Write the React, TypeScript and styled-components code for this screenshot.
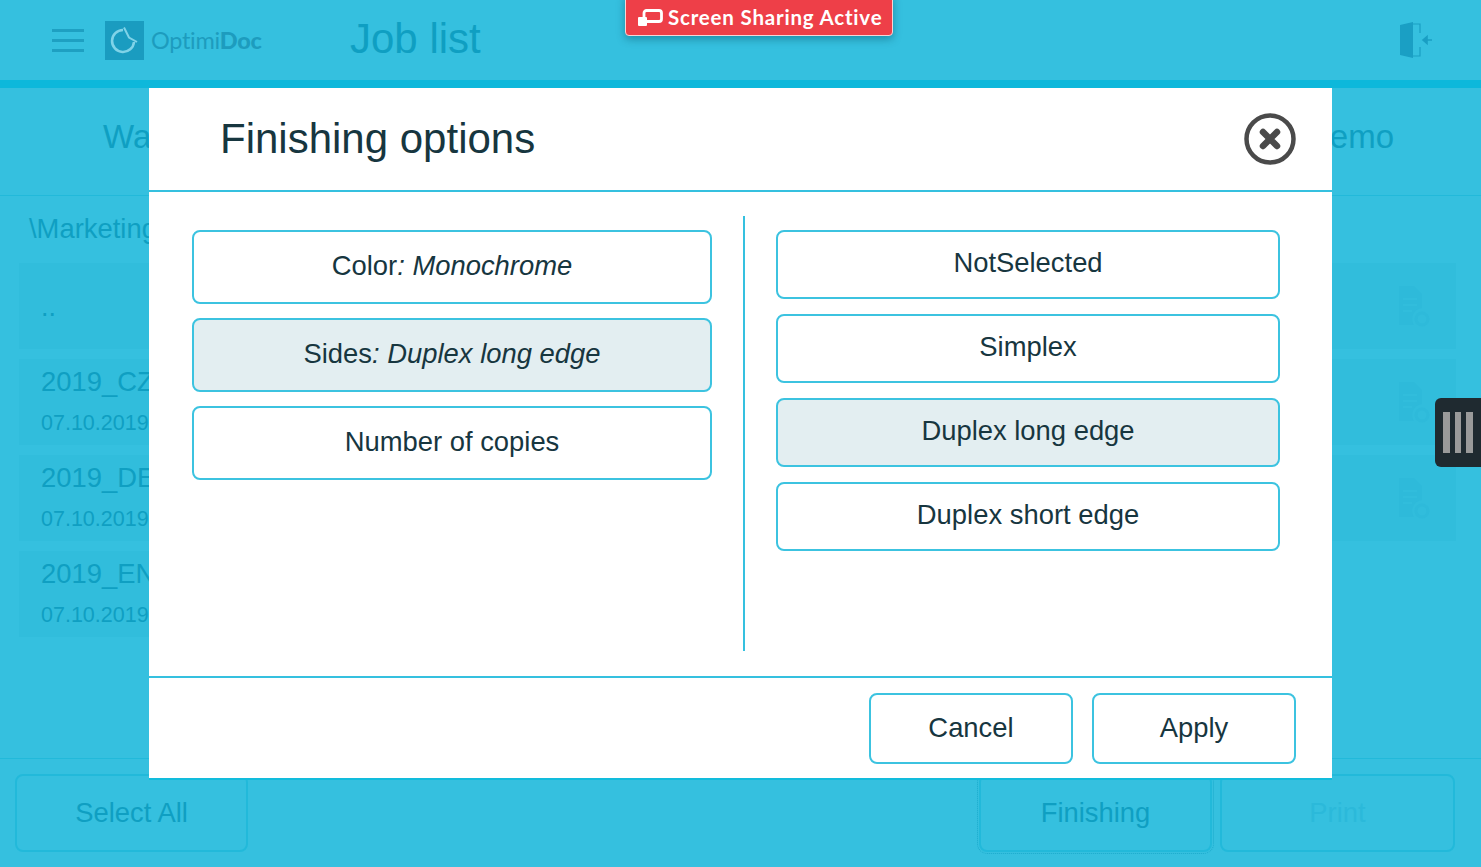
import styled, { createGlobalStyle } from "styled-components";

const GlobalStyle = createGlobalStyle`
  html, body {
    margin: 0;
    padding: 0;
    height: 100%;
    overflow: hidden;
  }

  body {
    background: #35c0df;
    font-family: "Liberation Sans", Arial, sans-serif;
  }
`

const muted = "#0f9fc2";
const ink = "#17363f";
const line = "#3cc3e0";

const jobs = ["2019_CZ", "2019_DE", "2019_EN"];

const FileIcon = () => (
  <FileSvg viewBox="0 0 34 44">
    <path d="M3 1h15l8 8v14a11 11 0 0 0-8 17H3z" />
    <path d="M7 14h14M7 20h14M7 26h9" stroke="#31bddc" strokeWidth="2" />
    <circle cx="26" cy="34" r="6" fill="none" stroke="#2ebada" strokeWidth="3" />
  </FileSvg>
)

const App = () => {
  return (
    <>
      <GlobalStyle />
      <Page>
        <Header>
          <Burger>
            <span />
            <span />
            <span />
          </Burger>
          <Logo>
            <LogoMark viewBox="0 0 39 39">
              <rect width="39" height="39" fill="#1a9cc0" />
              <path
                d="M18 9A11 11 0 1 0 29 21"
                fill="none"
                stroke="#7fd3e8"
                strokeWidth="2.600"
              />
              <path
                d="M19 6.500L24 16.500 32 21"
                fill="none"
                stroke="#7fd3e8"
                strokeWidth="2"
              />
            </LogoMark>
            <LogoText>Optimi<b>Doc</b></LogoText>
          </Logo>
          <Title>Job list</Title>
          <DoorIcon viewBox="0 0 33 38">
            <path d="M0 4l13-3v36l-13-3z" fill="#1a9fc4" />
            <path d="M13 3h7v9M20 26v9h-7" fill="none" stroke="#1a9fc4" strokeWidth="1.200" />
            <path d="M32 19h-6M27 15.500l-4 3.500 4 3.500z" fill="#1a9fc4" stroke="#1a9fc4" strokeWidth="1.600" />
          </DoorIcon>
        </Header>

        <Tabs>
          <Tab>Waiting</Tab>
          <Tab>Demo</Tab>
        </Tabs>

        <Path>\Marketing</Path>

        <List>
          <Row>
            <Dots>..</Dots>
            <FileIcon />
          </Row>
          {jobs.map((job, i) => (
            <Row key={job} $short={i === 2}>
              <div>
                <JobName>{job}</JobName>
                <JobDate>07.10.2019</JobDate>
              </div>
              {i < 2 && <FileIcon />}
            </Row>
          ))}
        </List>

        <Footer>
          <FootBtn>Select All</FootBtn>
          <FootSpacer />
          <FootBtn $focused>Finishing</FootBtn>
          <FootBtn $disabled>Print</FootBtn>
        </Footer>
      </Page>

      <ShareBadge>
        <svg width="25" height="17" viewBox="0 0 25 17" fill="none">
          <rect x="6" y="1.500" width="17.500" height="11" rx="2.500" stroke="#fff" strokeWidth="2.800" />
          <rect x="0" y="8" width="9" height="9" rx="1" fill="#fff" />
        </svg>
        Screen Sharing Active
      </ShareBadge>

      <SideHandle>
        <span />
        <span />
        <span />
      </SideHandle>

      <Modal>
        <ModalHead>
          <ModalTitle>Finishing options</ModalTitle>
          <CloseIcon viewBox="0 0 52 52">
            <circle cx="26" cy="26" r="23.500" fill="none" stroke="#4a4a4a" strokeWidth="4.500" />
            <path d="M19 19l14 14M33 19l-14 14" stroke="#4a4a4a" strokeWidth="6.500" strokeLinecap="round" />
          </CloseIcon>
        </ModalHead>

        <ModalBody>
          <OptionColumn>
            <OptionBtn>Color<em>: Monochrome</em></OptionBtn>
            <OptionBtn $active>Sides<em>: Duplex long edge</em></OptionBtn>
            <OptionBtn>Number of copies</OptionBtn>
          </OptionColumn>
          <Divider />
          <ValueColumn>
            <ValueBtn>NotSelected</ValueBtn>
            <ValueBtn>Simplex</ValueBtn>
            <ValueBtn $active>Duplex long edge</ValueBtn>
            <ValueBtn>Duplex short edge</ValueBtn>
          </ValueColumn>
        </ModalBody>

        <ModalFoot>
          <ActionBtn>Cancel</ActionBtn>
          <ActionBtn>Apply</ActionBtn>
        </ModalFoot>
      </Modal>
    </>
  )
}

export default App;

const Page = styled.div`
  height: 100vh;
  display: flex;
  flex-direction: column;
  color: ${muted};
`

const Header = styled.header`
  height: 80px;
  flex: none;
  display: flex;
  align-items: center;
  padding: 0 48px 0 52px;
  border-bottom: 8px solid #0db8db;
`

const Burger = styled.div`
  width: 32px;
  height: 23px;
  display: flex;
  flex-direction: column;
  justify-content: space-between;

  span {
    height: 3px;
    background: #1ea0c2;
  }
`

const Logo = styled.div`
  display: flex;
  align-items: center;
  margin-left: 21px;
  width: 245px;
`

const LogoMark = styled.svg`
  width: 39px;
  height: 39px;
`

const LogoText = styled.span`
  font-family: Lato, sans-serif;
  font-size: 23.500px;
  margin-left: 7px;
  color: #1d9cbe;
  letter-spacing: -0.3px;

  b {
    font-weight: 900;
  }
`

const Title = styled.h1`
  flex: 1;
  margin: -3px 0 0;
  font-size: 42px;
  font-weight: 400;
`

const DoorIcon = styled.svg`
  width: 33px;
  height: 38px;
`

const Tabs = styled.nav`
  height: 108px;
  flex: none;
  box-sizing: border-box;
  display: flex;
  justify-content: space-between;
  align-items: center;
  padding: 0 87px 9px 103px;
  border-bottom: 1px solid #22b9da;
`

const Tab = styled.div`
  font-size: 33px;
`

const Path = styled.div`
  height: 67px;
  flex: none;
  padding: 17px 0 0 29px;
  box-sizing: border-box;
  font-size: 27.400px;
`

const List = styled.div`
  flex: 1;
  display: flex;
  flex-direction: column;
  gap: 10px;
  padding: 0 25px 0 19px;
`

const Row = styled.div<{ $short?: boolean }>`
  height: 86px;
  width: ${({ $short }) => ($short ? "1000px" : "auto")};
  flex: none;
  box-sizing: border-box;
  padding: 0 26px 3px 22px;
  display: flex;
  justify-content: space-between;
  align-items: center;
  background: #31bddc;
`

const Dots = styled.div`
  font-size: 27px;
  padding-top: 6px;
`

const JobName = styled.div`
  font-size: 27.400px;
  line-height: 34px;
`

const JobDate = styled.div`
  font-size: 21.500px;
  line-height: 26px;
  margin-top: 11px;
`

const FileSvg = styled.svg`
  width: 34px;
  height: 44px;
  margin-top: 4px;
  fill: #2ebada;
`

const Footer = styled.footer`
  height: 109px;
  flex: none;
  box-sizing: border-box;
  display: flex;
  gap: 8px;
  padding: 15px 26px 15px 15px;
  border-top: 1px solid #22b9da;
`

const FootSpacer = styled.div`
  flex: 1;
`

const FootBtn = styled.div<{ $focused?: boolean; $disabled?: boolean }>`
  width: ${({ $disabled }) => ($disabled ? "235px" : "233px")};
  box-sizing: border-box;
  display: flex;
  align-items: center;
  justify-content: center;
  font-size: 27.400px;
  border: 2px solid #22b9da;
  border-radius: 8px;
  color: ${({ $disabled }) => ($disabled ? "#2bb9da" : muted)};
  outline: ${({ $focused }) => ($focused ? "1px dotted #1aa9cc" : "none")};
  outline-offset: 1px;
`

const ShareBadge = styled.div`
  position: absolute;
  top: -6px;
  left: 625px;
  width: 268px;
  height: 42px;
  box-sizing: border-box;
  padding: 4px 0 0 12px;
  display: flex;
  align-items: center;
  gap: 5px;
  background: #ee3f48;
  border: 1px solid #f6d5d6;
  border-radius: 4px;
  box-shadow: 0 3px 8px rgba(0, 60, 80, 0.4);
  color: #fff;
  font-family: Lato, sans-serif;
  font-size: 20.500px;
  font-weight: 700;
  letter-spacing: 0.8px;
`

const SideHandle = styled.div`
  position: absolute;
  top: 398px;
  right: 0;
  width: 46px;
  height: 69px;
  box-sizing: border-box;
  padding: 14px 8px;
  display: flex;
  gap: 5px;
  background: #1f2a30;
  border-radius: 6px 0 0 6px;

  span {
    width: 6.500px;
    background: #9a9a9a;
  }
`

const Modal = styled.div`
  position: absolute;
  top: 88px;
  left: 149px;
  width: 1183px;
  height: 692px;
  display: flex;
  flex-direction: column;
  box-sizing: border-box;
  background: #fff;
  color: ${ink};
  border-bottom: 2px solid #12bcdc;
`

const ModalHead = styled.div`
  height: 104px;
  flex: none;
  box-sizing: border-box;
  display: flex;
  align-items: center;
  justify-content: space-between;
  padding: 0 36px 0 71px;
  border-bottom: 2px solid #35c0df;
`

const ModalTitle = styled.h2`
  margin: 0;
  font-size: 42px;
  font-weight: 400;
`

const CloseIcon = styled.svg`
  width: 52px;
  height: 52px;
`

const ModalBody = styled.div`
  flex: 1;
  display: flex;
  padding: 24px 52px 25px 43px;
`

const OptionColumn = styled.div`
  width: 520px;
  display: flex;
  flex-direction: column;
  gap: 14px;
  padding-top: 14px;
`

const ValueColumn = styled.div`
  width: 504px;
  display: flex;
  flex-direction: column;
  gap: 15px;
  padding-top: 14px;
`

const Divider = styled.div`
  width: 2px;
  margin: 0 31px;
  background: #35c0df;
`

const OptionBtn = styled.div<{ $active?: boolean }>`
  height: 74px;
  box-sizing: border-box;
  display: flex;
  align-items: center;
  justify-content: center;
  white-space: pre-wrap;
  padding-bottom: 2px;
  font-size: 27.400px;
  border: 2px solid ${line};
  border-radius: 8px;
  background: ${({ $active }) => ($active ? "#e3eef1" : "#fff")};
`

const ValueBtn = styled(OptionBtn)`
  height: 69px;
  padding-bottom: 4px;
`

const ModalFoot = styled.div`
  height: 102px;
  flex: none;
  box-sizing: border-box;
  display: flex;
  justify-content: flex-end;
  gap: 19px;
  padding: 15px 36px 14px 0;
  border-top: 2px solid #35c0df;
`

const ActionBtn = styled.div`
  width: 204px;
  display: flex;
  align-items: center;
  justify-content: center;
  font-size: 27.400px;
  box-sizing: border-box;
  padding-bottom: 1px;
  border: 2px solid ${line};
  border-radius: 8px;
`
